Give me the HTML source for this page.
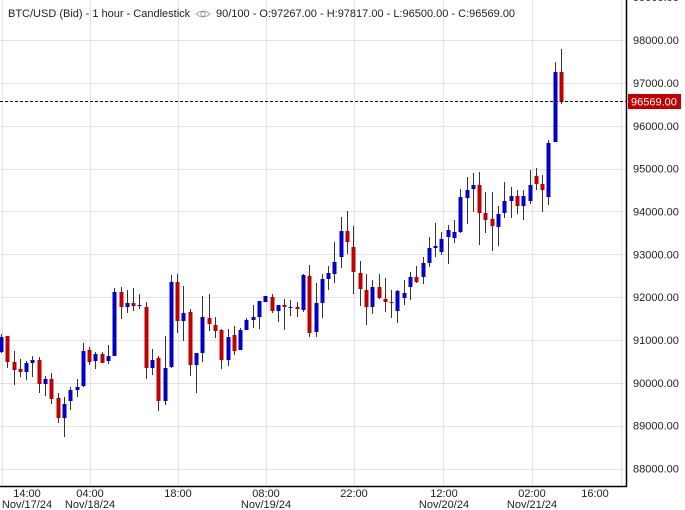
<!DOCTYPE html>
<html><head><meta charset="utf-8">
<style>
html,body{margin:0;padding:0;background:#fff;width:685px;height:510px;overflow:hidden;font-family:"Liberation Sans",Arial,sans-serif;}
svg{position:absolute;left:0;top:0}
</style></head><body>
<svg id="s" width="685" height="510" xmlns="http://www.w3.org/2000/svg" font-family="Liberation Sans, Arial, sans-serif">
<rect width="685" height="510" fill="#fff"/>
<g id="grid" stroke="#e3e3e3" stroke-width="1"></g>
<g id="c"></g>
<line x1="0" y1="101.5" x2="626" y2="101.5" stroke="#000" stroke-width="1" stroke-dasharray="3,2"/>
<line x1="626.5" y1="0" x2="626.5" y2="487" stroke="#000" stroke-width="1.5"/>
<line x1="0" y1="486.5" x2="627" y2="486.5" stroke="#000" stroke-width="1.5"/>
<g id="ax" font-size="11" fill="#222"></g>
<rect x="628" y="94" width="53" height="15" fill="#c00000"/>
<text x="631" y="105.5" font-size="11" fill="#fff">96569.00</text>
<text x="8" y="17" font-size="11" fill="#222">BTC/USD (Bid) - 1 hour - Candlestick</text>
<g transform="translate(203,14)" stroke="#888" fill="none" stroke-width="0.8">
<path d="M-7,0 Q0,-6 7,0 Q0,6 -7,0Z"/><circle cx="0" cy="0" r="2.3"/>
</g>
<text x="216" y="17" font-size="11" fill="#222">90/100 - O:97267.00 - H:97817.00 - L:96500.00 - C:96569.00</text>
<g id="bt" font-size="11" fill="#222" text-anchor="middle"></g>
</svg>
<script>
var NS="http://www.w3.org/2000/svg";
function el(p,t,a,txt){var e=document.createElementNS(NS,t);for(var k in a)e.setAttribute(k,a[k]);if(txt)e.textContent=txt;document.getElementById(p).appendChild(e);}
var gx=[2,90,178,266,354,443,532,621];
gx.forEach(function(x){el("grid","line",{x1:x+.5,y1:0,x2:x+.5,y2:486});});
var prices=[99000,98000,97000,96000,95000,94000,93000,92000,91000,90000,89000,88000];
prices.forEach(function(p,i){var y=-2.8+42.85*i;el("grid","line",{x1:0,y1:Math.round(y)+.5,x2:626,y2:Math.round(y)+.5});
 el("ax","text",{x:633,y:y+4},p+".00");});
var bl=[[27,"14:00","Nov/17/24"],[90,"04:00","Nov/18/24"],[178,"18:00",""],[266,"08:00","Nov/19/24"],[354,"22:00",""],[444,"12:00","Nov/20/24"],[532,"02:00","Nov/21/24"],[595,"16:00",""]];
bl.forEach(function(b){el("bt","text",{x:b[0],y:497},b[1]);if(b[2])el("bt","text",{x:b[0],y:508},b[2]);});
var d=[
"b337352334353","r336362336368","r362370351385","r369372359377","b363372361380","b360363356377","r360384357393","b379384376396","r379399373404","r398418393423","b404418397437","b390401387410","b387390379397","b351386343387","r350362347365","b354361352369","r354363352363","b356361345364","b292356288356","r292307287319","b303307290313","r303306288311","b305306294309","r307368302379","b360368349375","r358401356411","b368401336405","b282367275368","r282321274333","b313321286341","r312365309376","b353365353393","b317353296362","r318324294331","r325331317338","r330360329369","b337360329366","r335351326355","b330350328350","b320330318330","b317320305328","b301317301329","b296302296302","r297311294313","b305311305322","r305307299330","b307308300316","r307309302317",
"b275310274312","r276333265337","b303332283337","b279303274318","b273279266290","b262274242283","b231257217268","r231242211254","r247272226294","r273289261306","r290307274325","b287307280314","r287298274299","r299302278312","r302303290318","b291311290323","b293298280305","b277287272300","r277282266283","b263277257284","b248263237267","b246248223257","b239252232255","b230237225264","b232238220243","b197232189233","b190198177224","b185189173212","r185213172245","r213220192233","r219226192251","b214227206246","b201213182218","b196201187218","r196206190214","b196206190220","b185201170204","r176184168190","r184190175212","b143197140205","b072142062142","r072102049104"];
var sp=560/(d.length-1);
d.forEach(function(s,i){var t=s[0],bt=+s.substr(1,3),bb=+s.substr(4,3),wt=+s.substr(7,3),wb=+s.substr(10,3);
 var x=1+i*sp;var cx=Math.round(x);
 el("c","line",{x1:cx+.5,y1:wt,x2:cx+.5,y2:wb,stroke:"#333","stroke-width":1});
 var h=Math.max(1,bb-bt);
 el("c","rect",{x:cx-1.5,y:bt,width:4,height:h,fill:t=="b"?"#0000c8":"#c00000"});});
</script>
</body></html>
